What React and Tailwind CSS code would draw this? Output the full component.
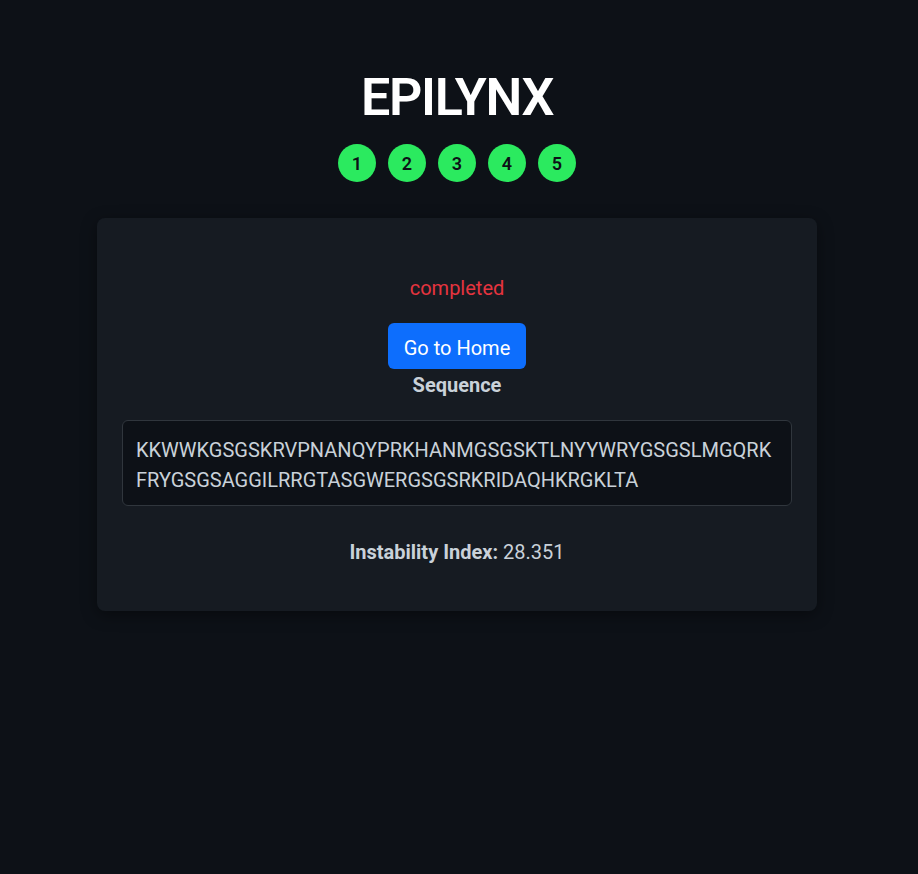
export default function App() {
    const steps = [1, 2, 3, 4, 5];

    return (
        <div className="min-h-[874px] bg-[#0d1117] text-[#c9d1d9] font-['Roboto',sans-serif] flex flex-col items-center pr-[4px]">
            {/* Header */}
            <h1 className="mt-[68px] text-[52px] leading-[60px] font-semibold text-white tracking-tight">
                EPILYNX
            </h1>

            {/* Steps */}
            <div className="mt-[16px] flex gap-3">
                {steps.map(n => (
                    <div
                        key={n}
                        className="w-[38px] h-[38px] rounded-full bg-[#2bea5f] flex items-center justify-center text-[18px] font-semibold text-[#0d1117]"
                    >
                        {n}
                    </div>
                ))}
            </div>

            {/* Card */}
            <div className="mt-[36px] w-[720px] rounded-lg bg-[#161b22] shadow-[0_4px_16px_rgba(0,0,0,0.4)] px-[25px] pt-[56px] pb-[45px] flex flex-col items-center">
                <p className="text-[20px] leading-[28px] text-[#e5343f]">completed</p>

                <button className="mt-[21px] h-[46px] px-4 pt-[3px] rounded-md bg-[#0d6efd] text-white text-[20px]">
                    Go to Home
                </button>

                <h3 className="mt-[4px] text-[20px] leading-[24px] font-bold text-[#c9d1d9]">Sequence</h3>

                <div className="mt-[23px] w-full rounded-md border border-[#30363d] bg-[#0d1117] px-[13px] pt-[14px] pb-[10px] text-[20px] leading-[30px] text-[#c9d1d9] break-all">
                    KKWWKGSGSKRVPNANQYPRKHANMGSGSKTLNYYWRYGSGSLMGQRKFRYGSGSAGGILRRGTASGWERGSGSRKRIDAQHKRGKLTA
                </div>

                <p className="mt-[32px] text-[20px] leading-[28px]">
                    <span className="font-bold">Instability Index:</span> 28.351
                </p>
            </div>
        </div>
    );
}
